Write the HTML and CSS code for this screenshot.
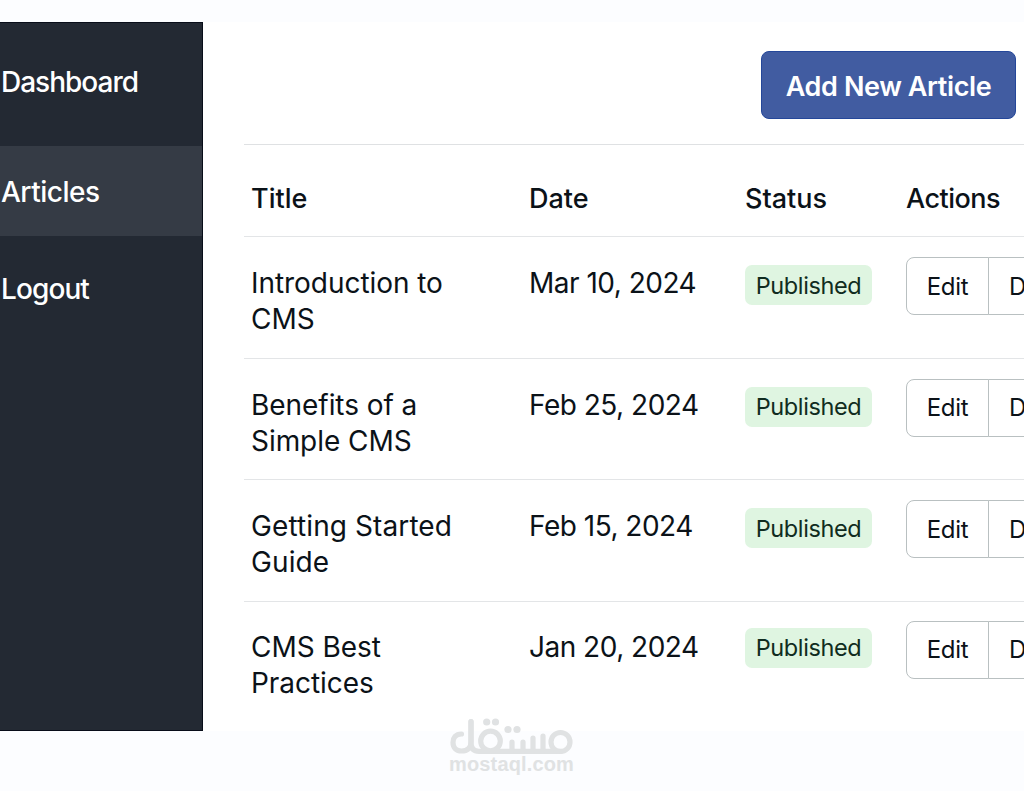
FILE: index.html
```html
<!DOCTYPE html>
<html lang="en">
<head>
<meta charset="utf-8">
<title>Articles</title>
<link rel="stylesheet" href="styles.css">
</head>
<body>
<div class="app">
  <nav class="sidebar">
    <a class="nav-item nav-dashboard">Dashboard</a>
    <a class="nav-item nav-articles">Articles</a>
    <a class="nav-item nav-logout">Logout</a>
  </nav>
  <main class="main">
    <header class="toolbar"><button class="add">Add New Article</button></header>
    <section class="table">
      <div class="row head"><span>Title</span><span>Date</span><span>Status</span><span class="h-actions">Actions</span></div>
      <div class="row">
        <div class="title">Introduction to<br>CMS</div><div class="date">Mar 10, 2024</div>
        <div class="status"><span class="badge">Published</span></div>
        <div class="actions"><button class="btn">Edit</button><button class="btn">Delete</button></div>
      </div>
      <div class="row">
        <div class="title">Benefits of a<br>Simple CMS</div><div class="date">Feb 25, 2024</div>
        <div class="status"><span class="badge">Published</span></div>
        <div class="actions"><button class="btn">Edit</button><button class="btn">Delete</button></div>
      </div>
      <div class="row">
        <div class="title wide">Getting Started<br>Guide</div><div class="date">Feb 15, 2024</div>
        <div class="status"><span class="badge">Published</span></div>
        <div class="actions"><button class="btn">Edit</button><button class="btn">Delete</button></div>
      </div>
      <div class="row last">
        <div class="title">CMS Best<br>Practices</div><div class="date">Jan 20, 2024</div>
        <div class="status"><span class="badge">Published</span></div>
        <div class="actions"><button class="btn">Edit</button><button class="btn">Delete</button></div>
      </div>
    </section>
  </main>
</div>
<div class="watermark">
  <svg class="mark" width="126" height="38" viewBox="0 0 126 38" role="img" aria-label="مستقل">
    <g fill="none" stroke="#e0e2e3" stroke-width="5.200" stroke-linecap="round" stroke-linejoin="round">
      <path d="M12.500 17C6.500 17 4 21 4 25.500C4 31 7.500 34 12.500 34C18.500 34 22 31 22 25V4.500"/>
      <path d="M22 4.500V26Q22 34.300 30 34.300H112"/>
      <circle cx="41.500" cy="24" r="9.800"/>
      <path d="M63 25V33M74 25V33M84 21V33M94 19V33"/>
      <circle cx="111.500" cy="25" r="9.500"/>
    </g>
    <g fill="#e0e2e3"><circle cx="37.700" cy="5" r="3.600"/><circle cx="46.500" cy="5" r="3.600"/><circle cx="59" cy="12.500" r="3.600"/><circle cx="68" cy="12.500" r="3.600"/></g>
  </svg>
  <span class="domain">mostaql.com</span>
</div>
</body>
</html>
```

FILE: styles.css
```css
* { box-sizing: border-box; }
body {
  margin: 0;
  width: 1024px;
  height: 791px;
  padding-top: 22px;
  overflow: hidden;
  background: #fcfdff;
  font-family: Inter, "Liberation Sans", sans-serif;
  font-size: 28px;
  color: #0b1218;
}
.app { display: flex; height: 709px; }
.sidebar {
  flex: 0 0 203px;
  background: #232933;
  border: solid #080d19;
  border-width: 1px 1px 1px 0;
  color: #fff;
}
.nav-item {
  display: flex;
  align-items: center;
  padding-left: 1px;
  font-weight: 500;
  letter-spacing: -1px;
}
.nav-dashboard { height: 123px; padding-bottom: 5px; }
.nav-articles { height: 90px; padding-top: 1px; background: #353b45; letter-spacing: -0.5px; }
.nav-logout { height: 106px; letter-spacing: -0.9px; }
.main { flex: 1; min-width: 0; overflow: hidden; background: #fff; padding-left: 41px; }
.toolbar { display: flex; justify-content: flex-end; height: 122px; padding: 29px 8px 0 0; }
.add {
  width: 255px;
  height: 68px;
  padding: 2px 0 0;
  border: 1px solid #24479a;
  border-radius: 8px;
  background: #415ca1;
  color: #fff;
  font: 600 27px Inter, sans-serif;
  letter-spacing: -0.4px;
}
.row {
  display: grid;
  grid-template-columns: 278px 216px 161px 220px;
  height: 121.500px;
  padding-left: 7px;
  border-top: 1px solid #e3e5e7;
}
.head { height: 92px; padding-top: 15px; align-items: center; border-color: #dfe1e3; font-size: 27px; font-weight: 500; }
.h-actions { letter-spacing: -0.5px; }
.title, .date { padding-top: 28px; line-height: 36px; font-weight: 380; }
.title { letter-spacing: -0.05px; }
.wide { letter-spacing: 0.1px; }
.date { letter-spacing: -0.5px; }
.status { padding-top: 28px; }
.badge {
  display: flex;
  align-items: center;
  justify-content: center;
  width: 127px;
  height: 40px;
  border-radius: 7px;
  background: #dff5e1;
  color: #102c20;
  font-size: 23.500px;
  letter-spacing: -0.4px;
}
.actions { display: flex; padding-top: 20px; }
.btn {
  width: 83px;
  height: 58px;
  padding: 0;
  border: 1px solid #b9c0c1;
  border-radius: 8px 0 0 8px;
  background: #fff;
  color: #0b1218;
  font: 400 24px Inter, sans-serif;
  letter-spacing: -0.3px;
}
.btn + .btn { width: 118px; margin-left: -1px; padding-left: 20px; border-radius: 0 8px 8px 0; text-align: left; }
.last .title, .last .date { padding-top: 27px; }
.last .status { padding-top: 26px; }
.last .actions { padding-top: 19px; }
.watermark {
  position: absolute;
  left: 449px;
  top: 717px;
  width: 126px;
  display: flex;
  flex-direction: column;
  color: #e0e2e3;
}
.mark { display: block; }
.domain { font: 700 20px/18px "Liberation Sans", sans-serif; letter-spacing: 0.15px; }
```
